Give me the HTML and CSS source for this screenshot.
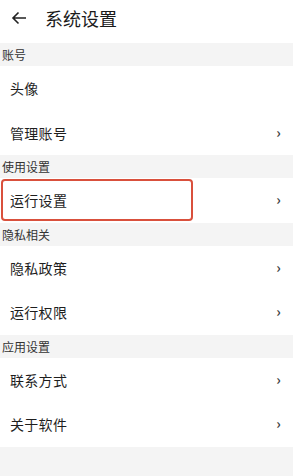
FILE: index.html
```html
<!DOCTYPE html>
<html lang="zh-CN">
<head>
    <meta charset="UTF-8">
    <meta name="viewport" content="width=device-width, initial-scale=1.0">
    <title>系统设置</title>
    <link rel="stylesheet" href="styles.css">
</head>
<body>
    <div class="page">
        <div class="topbar">
            <svg class="back" width="16" height="14" viewBox="0 0 16 14">
                <path d="M15 7H2M7.5 1.5L2 7l5.5 5.5" fill="none" stroke="#222" stroke-width="1.6"/>
            </svg>
            <div class="title">系统设置</div>
        </div>

        <div class="group-title">账号</div>
        <div class="item"><span>头像</span></div>
        <div class="item"><span>管理账号</span><span class="arrow">›</span></div>

        <div class="group-title">使用设置</div>
        <div class="item marked"><span>运行设置</span><span class="arrow">›</span></div>

        <div class="group-title">隐私相关</div>
        <div class="item"><span>隐私政策</span><span class="arrow">›</span></div>
        <div class="item"><span>运行权限</span><span class="arrow">›</span></div>

        <div class="group-title">应用设置</div>
        <div class="item"><span>联系方式</span><span class="arrow">›</span></div>
        <div class="item"><span>关于软件</span><span class="arrow">›</span></div>

        <div class="rest"></div>
    </div>
</body>
</html>
```

FILE: styles.css
```css
body {
    margin: 0;
    background-color: #fff;
    font-family: "Noto Sans CJK SC", "Noto Sans", sans-serif;
    color: #222;
}
.page {
    width: 293px;
    height: 476px;
    display: flex;
    flex-direction: column;
    background-color: #f4f4f4;
}
.topbar {
    height: 43px;
    flex-shrink: 0;
    display: flex;
    align-items: center;
    background-color: #fff;
    padding-bottom: 7px;
    box-sizing: border-box;
}
.back {
    margin-left: 11px;
    margin-right: 18px;
}
.title {
    font-size: 18px;
    line-height: 20px;
    color: #1a1a1a;
}
.group-title {
    height: 23px;
    flex-shrink: 0;
    display: flex;
    align-items: center;
    padding-left: 2px;
    font-size: 12px;
    color: #333;
    background-color: #f4f4f4;
}
.item {
    position: relative;
    height: 44.5px;
    flex-shrink: 0;
    display: flex;
    align-items: center;
    justify-content: space-between;
    padding: 0 12px 0 10px;
    background-color: #fff;
    font-size: 14px;
    letter-spacing: 0.3px;
    color: #1e1e1e;
}
.arrow {
    font-size: 14px;
    color: #444;
    font-weight: bold;
    margin-top: -2px;
}
.marked::after {
    content: "";
    position: absolute;
    left: 1px;
    top: 0.5px;
    width: 188px;
    height: 38px;
    border: 2px solid #d9503c;
    border-radius: 4px;
}
.rest {
    flex: 1;
}
```
